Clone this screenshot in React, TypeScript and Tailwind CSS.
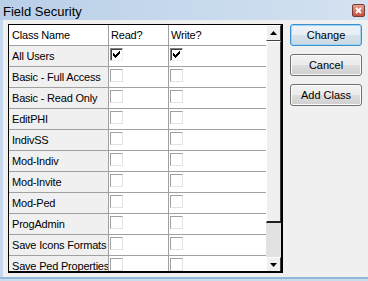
import React from "react";

const rows = [
  { name: "All Users", read: true, write: true },
  { name: "Basic - Full Access" },
  { name: "Basic - Read Only" },
  { name: "EditPHI" },
  { name: "IndivSS" },
  { name: "Mod-Indiv" },
  { name: "Mod-Invite" },
  { name: "Mod-Ped" },
  { name: "ProgAdmin" },
  { name: "Save Icons Formats" },
  { name: "Save Ped Properties" },
];

const checkPixels = [
  "......X",
  ".....XX",
  "X...XXX",
  "XX.XXX.",
  "XXXXX..",
  ".XXX...",
  "..X....",
];

function Check({ checked }: { checked?: boolean }) {
  if (checked) {
    return (
      <div className="relative w-[13px] h-[13px] border border-t-[#808080] border-l-[#808080] border-r-[#f0f0f0] border-b-[#f0f0f0] bg-white shadow-[inset_1px_1px_0_#404040]">
        <svg className="absolute left-[1px] top-[1px]" width="9" height="9" viewBox="0 0 9 9" shapeRendering="crispEdges">
          {checkPixels.flatMap((row, y) =>
            row.split("").map((c, x) =>
              c === "X" ? <rect key={`${x}-${y}`} x={x + 1} y={y + 1} width="1" height="1" fill="#000" /> : null
            )
          )}
        </svg>
      </div>
    );
  }
  return (
    <div className="w-[13px] h-[13px] border border-t-[#a0a0a0] border-l-[#a0a0a0] border-r-[#e3e3e3] border-b-[#e3e3e3] bg-white" />
  );
}

function Btn({ label, primary }: { label: string; primary?: boolean }) {
  return (
    <div
      className={
        primary
          ? "h-[22px] w-[72px] rounded-[3px] border border-[#3c8fcf] shadow-[inset_0_0_0_1px_#9fd6f5] bg-[linear-gradient(to_bottom,#eef4f8_0%,#e6eef4_50%,#d6e2ea_50%,#cbd9e3_100%)] flex items-center justify-center text-[11px] text-black"
          : "h-[22px] w-[72px] rounded-[3px] border border-[#707070] shadow-[inset_0_0_0_1px_#fbfbfb] bg-[linear-gradient(to_bottom,#f2f2f2_0%,#ebebeb_50%,#dddddd_50%,#cfcfcf_100%)] flex items-center justify-center text-[11px] text-black"
      }
    >
      {label}
    </div>
  );
}

export default function App() {
  return (
    <div className="w-[368px] h-[281px] flex flex-col overflow-hidden bg-[#c4d7ec] font-['Liberation_Sans',Arial,sans-serif] text-black">
      <div className="h-[20px] shrink-0 flex items-center justify-between pl-[3px] pr-[3px] bg-[linear-gradient(to_right,#b9cfe8,#d4e2f1)]">
        <span className="text-[13px] leading-none pt-[2px]">Field Security</span>
        <div className="w-[13px] h-[13px] mt-[1px] rounded-[2px] border border-[#7a3a30] bg-[linear-gradient(to_bottom,#e8a090,#c75040)] flex items-center justify-center">
          <svg width="7" height="7" viewBox="0 0 7 7">
            <path d="M1 1 L6 6 M6 1 L1 6" stroke="#fff" strokeWidth="1.8" />
          </svg>
        </div>
      </div>
      <div className="flex-1 flex ml-[3px] bg-[#f0f0f0] pt-[4px] pl-[5px]">
        <div className="w-[275px] h-[249px] flex overflow-hidden bg-white border-l border-t border-r-2 border-b-2 border-black">
          <div className="w-[257px] flex flex-col text-[11px] tracking-[-0.2px]">
            <div className="h-[21px] shrink-0 flex border-b border-[#a0a0a0]">
              <div className="w-[100px] border-r border-[#a0a0a0] flex items-center pl-[3px]">Class Name</div>
              <div className="w-[60px] border-r border-[#a0a0a0] flex items-center pl-[2px]">Read?</div>
              <div className="flex-1 flex items-center pl-[2px]">Write?</div>
            </div>
            {rows.map((r) => (
              <div key={r.name} className="h-[21px] shrink-0 flex border-b border-[#a0a0a0]">
                <div className="w-[100px] border-r border-[#a0a0a0] bg-[#f0f0f0] flex items-center pl-[3px] whitespace-nowrap overflow-hidden">
                  {r.name}
                </div>
                <div className="w-[60px] border-r border-[#a0a0a0] pt-[2px] pl-[1px]">
                  <Check checked={r.read} />
                </div>
                <div className="flex-1 pt-[2px] pl-[1px]">
                  <Check checked={r.write} />
                </div>
              </div>
            ))}
          </div>
          <div className="w-[15px] flex flex-col">
            <div className="h-[16px] shrink-0 bg-[#f0f0f0] border-t border-l border-white border-r border-b border-r-[#404040] border-b-[#404040] flex items-center justify-center">
              <svg width="7" height="4" viewBox="0 0 7 4">
                <path d="M0 4 L3.5 0 L7 4 Z" fill="#000" />
              </svg>
            </div>
            <div className="h-[182px] shrink-0 bg-[#f0f0f0] border-t border-l border-white border-r border-b-2 border-r-[#404040] border-b-[#202020]" />
            <div className="h-[34px] shrink-0 bg-[#e2e2e2]" />
            <div className="h-[16px] shrink-0 bg-[#f0f0f0] border-t border-l border-white border-r border-b border-r-[#404040] border-b-[#404040] flex items-center justify-center">
              <svg width="7" height="4" viewBox="0 0 7 4">
                <path d="M0 0 L3.5 4 L7 0 Z" fill="#000" />
              </svg>
            </div>
          </div>
        </div>
        <div className="ml-[7px] flex flex-col gap-[8px]">
          <Btn label="Change" primary />
          <Btn label="Cancel" />
          <Btn label="Add Class" />
        </div>
      </div>
      <div className="h-[4px] shrink-0 border-t-2 border-[#94b6d9] bg-[#c9dbee]" />
    </div>
  );
}
